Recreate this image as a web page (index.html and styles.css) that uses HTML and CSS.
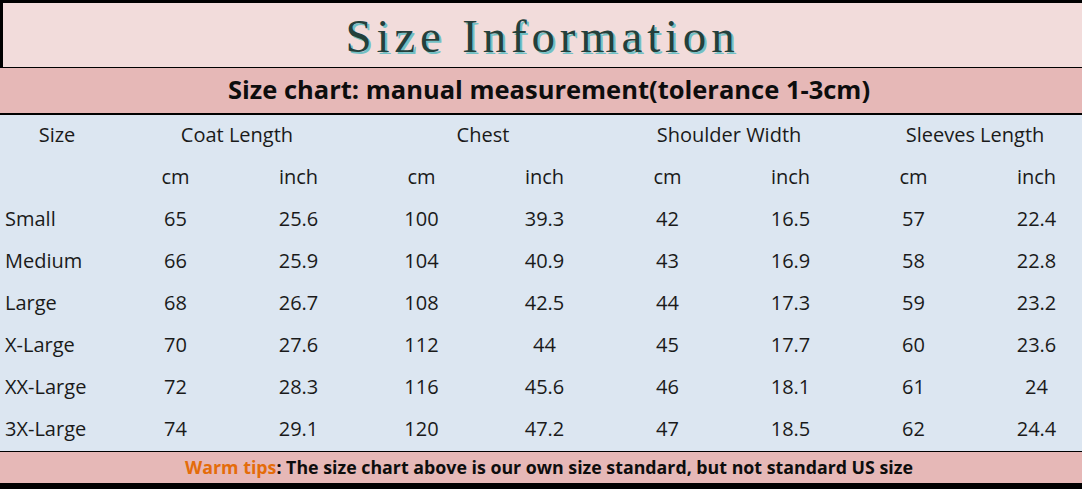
FILE: index.html
```html
<!DOCTYPE html>
<html lang="en">
<head>
<meta charset="utf-8">
<title>Size Information</title>
<link rel="stylesheet" href="styles.css">
</head>
<body>
<div class="sheet">
  <header class="title-band">
    <h1 class="title">Size Information</h1>
  </header>
  <div class="subtitle">Size chart: manual measurement(tolerance 1-3cm)</div>
  <div class="chart">
    <div class="cell head">Size</div>
    <div class="cell head span2">Coat Length</div>
    <div class="cell head span2">Chest</div>
    <div class="cell head span2">Shoulder Width</div>
    <div class="cell head span2">Sleeves Length</div>

    <div class="cell"></div>
    <div class="cell">cm</div><div class="cell">inch</div>
    <div class="cell">cm</div><div class="cell">inch</div>
    <div class="cell">cm</div><div class="cell">inch</div>
    <div class="cell">cm</div><div class="cell">inch</div>

    <div class="cell label">Small</div>
    <div class="cell">65</div><div class="cell">25.6</div>
    <div class="cell">100</div><div class="cell">39.3</div>
    <div class="cell">42</div><div class="cell">16.5</div>
    <div class="cell">57</div><div class="cell">22.4</div>

    <div class="cell label">Medium</div>
    <div class="cell">66</div><div class="cell">25.9</div>
    <div class="cell">104</div><div class="cell">40.9</div>
    <div class="cell">43</div><div class="cell">16.9</div>
    <div class="cell">58</div><div class="cell">22.8</div>

    <div class="cell label">Large</div>
    <div class="cell">68</div><div class="cell">26.7</div>
    <div class="cell">108</div><div class="cell">42.5</div>
    <div class="cell">44</div><div class="cell">17.3</div>
    <div class="cell">59</div><div class="cell">23.2</div>

    <div class="cell label">X-Large</div>
    <div class="cell">70</div><div class="cell">27.6</div>
    <div class="cell">112</div><div class="cell">44</div>
    <div class="cell">45</div><div class="cell">17.7</div>
    <div class="cell">60</div><div class="cell">23.6</div>

    <div class="cell label">XX-Large</div>
    <div class="cell">72</div><div class="cell">28.3</div>
    <div class="cell">116</div><div class="cell">45.6</div>
    <div class="cell">46</div><div class="cell">18.1</div>
    <div class="cell">61</div><div class="cell">24</div>

    <div class="cell label">3X-Large</div>
    <div class="cell">74</div><div class="cell">29.1</div>
    <div class="cell">120</div><div class="cell">47.2</div>
    <div class="cell">47</div><div class="cell">18.5</div>
    <div class="cell">62</div><div class="cell">24.4</div>
  </div>
  <footer class="tips"><span class="warm">Warm tips</span>: The size chart above is our own size standard, but not standard US size</footer>
</div>
</body>
</html>
```

FILE: styles.css
```css
* { box-sizing: border-box; }
html, body {
  margin: 0;
  padding: 0;
  background: #000;
}
body {
  width: 1082px;
  height: 489px;
  overflow: hidden;
}
.sheet {
  width: 1082px;
  height: 489px;
  display: flex;
  flex-direction: column;
  background: #000;
  padding-top: 3px;
  overflow: hidden;
}
.title-band {
  height: 64px;
  flex: none;
  background: #f2dcdb;
  border-left: 3px solid #000;
  display: flex;
  align-items: center;
  justify-content: center;
}
.title {
  margin: 0;
  padding-top: 2px;
  font-family: "Liberation Serif", "Times New Roman", serif;
  font-weight: normal;
  font-size: 47px;
  letter-spacing: 4.8px;
  color: #24403b;
  text-shadow: 2px 2px 0 #72c0c4;
  line-height: 1;
}
.subtitle {
  margin-top: 1px;
  height: 45px;
  flex: none;
  background: #e6b8b7;
  display: flex;
  align-items: center;
  justify-content: center;
  padding-left: 16px;
  padding-bottom: 4px;
  font-family: "Open Sans", "Noto Sans", sans-serif;
  font-weight: 700;
  font-size: 25.5px;
  color: #0d0d0d;
}
.chart {
  margin-top: 2px;
  height: 336px;
  flex: none;
  background: #dce6f1;
  display: grid;
  grid-template-columns: 114px repeat(8, 123px);
  grid-auto-rows: 42px;
  font-family: "Open Sans", "Noto Sans", sans-serif;
  font-size: 20px;
  color: #1a1a1a;
  overflow: hidden;
}
.cell {
  display: flex;
  align-items: center;
  justify-content: center;
  white-space: nowrap;
  padding-bottom: 3px;
}
.span2 { grid-column: span 2; }
.label {
  justify-content: flex-start;
  padding-left: 5px;
}
.tips {
  margin-top: 1px;
  height: 31px;
  flex: none;
  background: #e6b8b7;
  display: flex;
  align-items: center;
  justify-content: center;
  padding-left: 16px;
  padding-bottom: 1px;
  font-family: "Open Sans", "Noto Sans", sans-serif;
  font-weight: 700;
  font-size: 17.8px;
  color: #0d0d0d;
  white-space: nowrap;
}
.warm { color: #e46c0a; }
```
